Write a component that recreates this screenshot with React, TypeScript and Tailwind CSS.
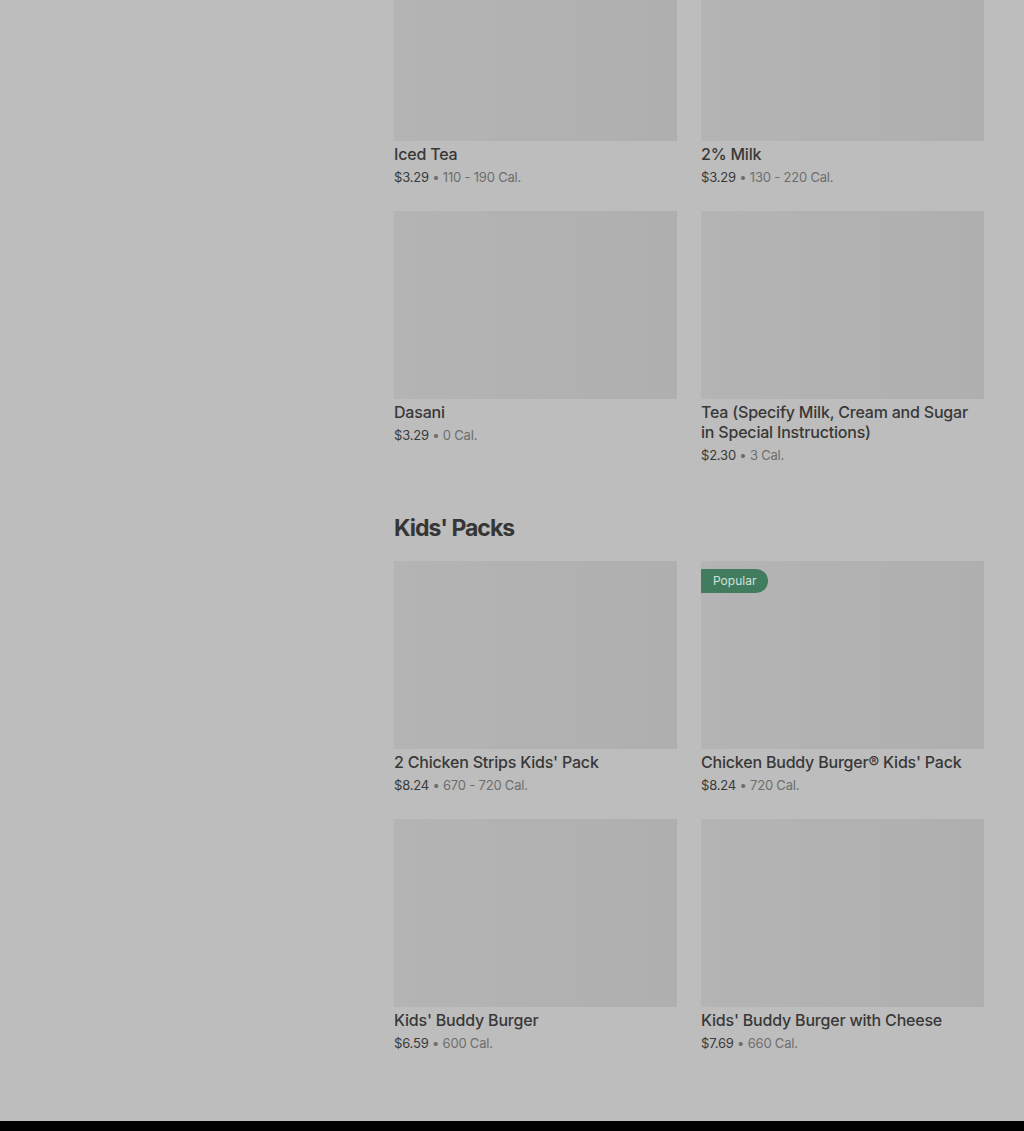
import React from "react";

type Item = { name: string; price: string; cal: string; popular?: boolean };

const drinks: Item[] = [
  { name: "Iced Tea", price: "$3.29", cal: "110 - 190 Cal." },
  { name: "2% Milk", price: "$3.29", cal: "130 - 220 Cal." },
  { name: "Dasani", price: "$3.29", cal: "0 Cal." },
  { name: "Tea (Specify Milk, Cream and Sugar in Special Instructions)", price: "$2.30", cal: "3 Cal." },
];

const kids: Item[] = [
  { name: "2 Chicken Strips Kids' Pack", price: "$8.24", cal: "670 - 720 Cal." },
  { name: "Chicken Buddy Burger® Kids' Pack", price: "$8.24", cal: "720 Cal.", popular: true },
  { name: "Kids' Buddy Burger", price: "$6.59", cal: "600 Cal." },
  { name: "Kids' Buddy Burger with Cheese", price: "$7.69", cal: "660 Cal." },
];

function Card({ item }: { item: Item }) {
  return (
    <div className="flex flex-col">
      <div className="relative h-[188px] w-full bg-gradient-to-r from-[#b4b4b4] to-[#afafaf]">
        {item.popular && (
          <div className="absolute left-0 top-[8px] flex h-[24px] items-center rounded-r-full bg-[#417c5e] pl-[12px] pr-[12px] text-[12px] leading-none text-[#d3e2da]">
            Popular
          </div>
        )}
      </div>
      <div className="mt-[3px] text-[16px] font-medium leading-[20px] tracking-[-0.2px] text-[#383838]">{item.name}</div>
      <div className="mt-[3px] text-[13px] leading-[20px] tracking-[-0.2px]">
        <span className="text-[#3a3a3a]">{item.price}</span>
        <span className="text-[#6e6e6e]"> • {item.cal}</span>
      </div>
    </div>
  );
}

export default function App() {
  return (
    <div
      className="min-h-[1131px] w-full overflow-hidden bg-[#bdbdbd]"
      style={{ fontFamily: "Inter, 'Noto Sans', sans-serif" }}
    >
      <div className="flex">
        <div className="w-[394px] shrink-0" />
        <div className="w-[590px] pb-[68px]">
          <div className="-mt-[47px] grid grid-cols-2 gap-x-[24px] gap-y-[24px]">
            {drinks.map((d) => (
              <Card key={d.name} item={d} />
            ))}
          </div>
          <h2 className="mt-[47px] text-[23px] font-bold leading-[32px] tracking-[-1px] text-[#363636]">Kids' Packs</h2>
          <div className="mt-[17px] grid grid-cols-2 gap-x-[24px] gap-y-[24px]">
            {kids.map((d) => (
              <Card key={d.name} item={d} />
            ))}
          </div>
        </div>
      </div>
      <div className="h-[60px] bg-black" />
    </div>
  );
}
